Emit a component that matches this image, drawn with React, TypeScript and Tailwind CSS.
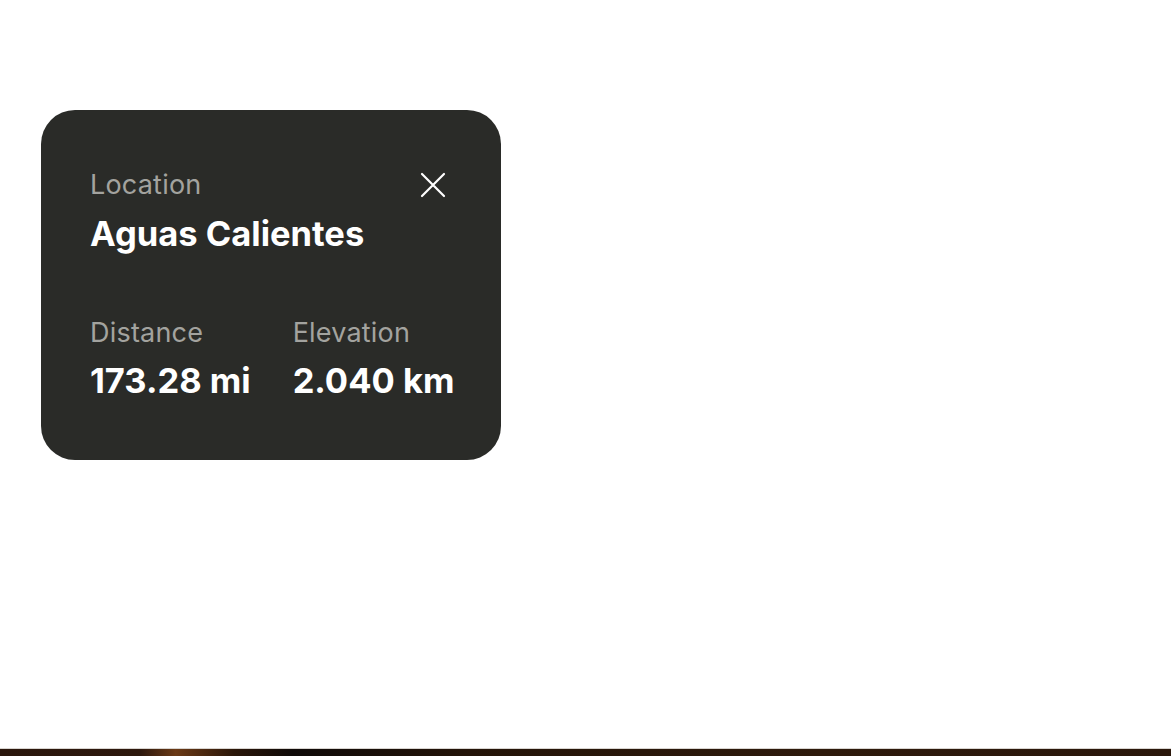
import React from 'react';

const Stat = ({ label, value }: { label: string; value: string }) => (
  <div className="flex flex-col shrink-0 whitespace-nowrap">
    <span className="text-[27px] leading-[32px] text-[#a3a39f] tracking-[0.2px]">{label}</span>
    <span className="mt-[12px] text-[34.5px] leading-[40px] font-bold text-white">{value}</span>
  </div>
);

export default function App() {
  return (
    <div className="w-[1171px] h-[756px] bg-white flex flex-col overflow-hidden" style={{ fontFamily: 'Inter, "Noto Sans", sans-serif' }}>
      <div className="flex-1 pt-[110px] pl-[41px]">
        <div className="w-[460px] h-[350px] rounded-[34px] bg-[#2a2b28] pt-[59px] pl-[49px] pr-[52px]">
          <div className="flex justify-between items-start">
            <div className="flex flex-col whitespace-nowrap">
              <span className="text-[27px] leading-[32px] text-[#a3a39f] tracking-[0.2px]">Location</span>
              <span className="mt-[13px] text-[34.5px] leading-[40px] font-bold text-white">Aguas Calientes</span>
            </div>
            <button className="mt-[3px] mr-[3px] w-[26px] h-[26px] text-white">
              <svg viewBox="0 0 26 26" className="w-[26px] h-[26px]" fill="none" stroke="currentColor" strokeWidth={2.2} strokeLinecap="round">
                <path d="M2 2L24 24M24 2L2 24" />
              </svg>
            </button>
          </div>
          <div className="mt-[63px] flex gap-[42px]">
            <Stat label="Distance" value="173.28 mi" />
            <Stat label="Elevation" value="2.040 km" />
          </div>
        </div>
      </div>
      <div className="h-[8px] border-t border-[#d8d4d0] bg-[linear-gradient(90deg,#2a160c_0%,#2d180d_12%,#6b3a16_15%,#2a1609_20%,#0f0a08_25%,#241408_40%,#2e1a0c_70%,#2a170b_100%)]" />
    </div>
  );
}
